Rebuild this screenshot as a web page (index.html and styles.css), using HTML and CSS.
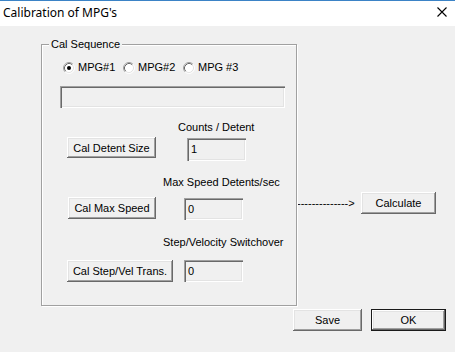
FILE: index.html
```html
<!DOCTYPE html>
<html>
<head>
<meta charset="utf-8">
<link rel="stylesheet" href="styles.css">
</head>
<body>
<div class="titlebar">
  <span class="title">Calibration of MPG's</span>
  <svg class="close" width="10" height="10" viewBox="0 0 10 10"><path d="M0.5 0.5 L9.5 9.5 M9.5 0.5 L0.5 9.5" stroke="#000" stroke-width="1.1" fill="none"/></svg>
</div>
<div class="content">
  <div class="group">
    <span class="legend">Cal Sequence</span>
    <div class="radios">
      <label class="radio">
        <svg width="12" height="12" viewBox="0 0 12 12"><circle cx="6" cy="6" r="5" fill="#fff"/><path d="M2.11 9.89 A5.5 5.5 0 0 1 9.89 2.11" stroke="#a0a0a0" fill="none"/><path d="M9.89 2.11 A5.5 5.5 0 0 1 2.11 9.89" stroke="#fff" fill="none"/><path d="M2.82 9.18 A4.5 4.5 0 0 1 9.18 2.82" stroke="#696969" fill="none"/><path d="M9.18 2.82 A4.5 4.5 0 0 1 2.82 9.18" stroke="#e3e3e3" fill="none"/><circle cx="6" cy="6" r="2" fill="#000"/></svg>
        <span>MPG#1</span>
      </label>
      <label class="radio">
        <svg width="12" height="12" viewBox="0 0 12 12"><circle cx="6" cy="6" r="5" fill="#fff"/><path d="M2.11 9.89 A5.5 5.5 0 0 1 9.89 2.11" stroke="#a0a0a0" fill="none"/><path d="M9.89 2.11 A5.5 5.5 0 0 1 2.11 9.89" stroke="#fff" fill="none"/><path d="M2.82 9.18 A4.5 4.5 0 0 1 9.18 2.82" stroke="#696969" fill="none"/><path d="M9.18 2.82 A4.5 4.5 0 0 1 2.82 9.18" stroke="#e3e3e3" fill="none"/></svg>
        <span>MPG#2</span>
      </label>
      <label class="radio">
        <svg width="12" height="12" viewBox="0 0 12 12"><circle cx="6" cy="6" r="5" fill="#fff"/><path d="M2.11 9.89 A5.5 5.5 0 0 1 9.89 2.11" stroke="#a0a0a0" fill="none"/><path d="M9.89 2.11 A5.5 5.5 0 0 1 2.11 9.89" stroke="#fff" fill="none"/><path d="M2.82 9.18 A4.5 4.5 0 0 1 9.18 2.82" stroke="#696969" fill="none"/><path d="M9.18 2.82 A4.5 4.5 0 0 1 2.82 9.18" stroke="#e3e3e3" fill="none"/></svg>
        <span>MPG #3</span>
      </label>
    </div>
    <div class="textbox wide"></div>

    <div class="label l1">Counts / Detent</div>
    <div class="row r1">
      <button class="btn b1">Cal Detent Size</button>
      <div class="textbox small t1">1</div>
    </div>

    <div class="label l2">Max Speed Detents/sec</div>
    <div class="row r2">
      <button class="btn b2">Cal Max Speed</button>
      <div class="textbox small t2">0</div>
    </div>

    <div class="label l3">Step/Velocity Switchover</div>
    <div class="row r3">
      <button class="btn b3">Cal Step/Vel Trans.</button>
      <div class="textbox small t3">0</div>
    </div>
  </div>
  <div class="side">
    <span class="arrow">--------------&gt;</span>
    <button class="btn calc">Calculate</button>
  </div>
</div>
<div class="footer">
  <button class="btn save">Save</button>
  <button class="btn ok">OK</button>
</div>
</body>
</html>
```

FILE: styles.css
```css
* { box-sizing: border-box; }
html, body {
  margin: 0;
  padding: 0;
  background: #f0f0f0;
  width: 455px;
  height: 352px;
  overflow: hidden;
  font-family: "Liberation Sans", Arial, sans-serif;
  font-size: 11px;
  color: #000;
}
.titlebar {
  height: 26px;
  background: #fff;
  border-top: 1px solid #3b83c6;
  display: flex;
  align-items: center;
  justify-content: space-between;
}
.title {
  font-family: "Noto Sans", "Open Sans", sans-serif;
  font-size: 12px;
  padding-left: 3px;
  line-height: 16px;
  margin-top: -2px;
}
.close {
  display: block;
  margin-right: 8px;
  margin-top: -4px;
}
.content {
  display: flex;
  padding-top: 18px;
}
.group {
  position: relative;
  margin-left: 41px;
  width: 256px;
  height: 262px;
  border: 1px solid #a0a0a0;
  box-shadow: 1px 1px 0 #fff, inset 1px 1px 0 #fff;
}
.legend {
  position: absolute;
  top: -7px;
  left: 7px;
  padding: 0 2px;
  background: #f0f0f0;
  line-height: 13px;
}
.radios {
  display: flex;
  margin-top: 16px;
  margin-left: 21px;
  height: 13px;
}
.radio {
  width: 60px;
  display: flex;
  align-items: center;
  gap: 3px;
  line-height: 13px;
}
.radio svg { display: block; flex: none; }
.textbox {
  height: 22px;
  background: #f0f0f0;
  box-shadow: inset 1px 1px 0 #a0a0a0, inset 2px 2px 0 #696969, inset -1px -1px 0 #fff, inset -2px -2px 0 #e3e3e3;
  padding-left: 4px;
  display: flex;
  align-items: center;
  line-height: 13px;
}
.wide {
  margin-top: 12px;
  margin-left: 18px;
  width: 225px;
}
.label {
  line-height: 13px;
  height: 13px;
  white-space: nowrap;
}
.l1 { margin-top: 13px; margin-left: 136px; }
.l2 { margin-top: 15px; margin-left: 121px; }
.l3 { margin-top: 16px; margin-left: 121px; }
.row {
  display: flex;
  align-items: flex-start;
}
.r1 { margin-top: 3px; }
.r2 { margin-top: 8px; }
.r3 { margin-top: 11px; }
.btn {
  font-family: "Liberation Sans", Arial, sans-serif;
  font-size: 11px;
  color: #000;
  background: #f0f0f0;
  border: none;
  padding: 0;
  height: 22px;
  box-shadow: inset -1px -1px 0 #696969, inset 1px 1px 0 #fff, inset -2px -2px 0 #a0a0a0, inset 2px 2px 0 #e3e3e3;
  display: flex;
  align-items: center;
  justify-content: center;
  white-space: nowrap;
}
.b1 { margin-left: 25px; width: 89px; height: 21px; }
.t1 { margin-left: 31px; margin-top: 1px; width: 59px; height: 23px; }
.b2 { margin-left: 26px; width: 88px; }
.t2 { margin-left: 28px; margin-top: 1px; width: 59px; }
.b3 { margin-left: 25px; width: 106px; }
.t3 { margin-left: 11px; width: 59px; }
.side {
  display: flex;
  align-items: center;
  padding-top: 148px;
  height: 170px;
}
.arrow {
  width: 64px;
  white-space: nowrap;
  line-height: 13px;
}
.calc { width: 75px; }
.footer {
  display: flex;
  justify-content: flex-end;
  gap: 9px;
  padding-right: 9px;
  margin-top: 3px;
}
.save { width: 69px; }
.ok {
  width: 75px;
  box-shadow: inset 0 0 0 1px #1a1a1a, inset -2px -2px 0 #696969, inset 2px 2px 0 #fff, inset -3px -3px 0 #a0a0a0, inset 3px 3px 0 #e3e3e3;
}
```
